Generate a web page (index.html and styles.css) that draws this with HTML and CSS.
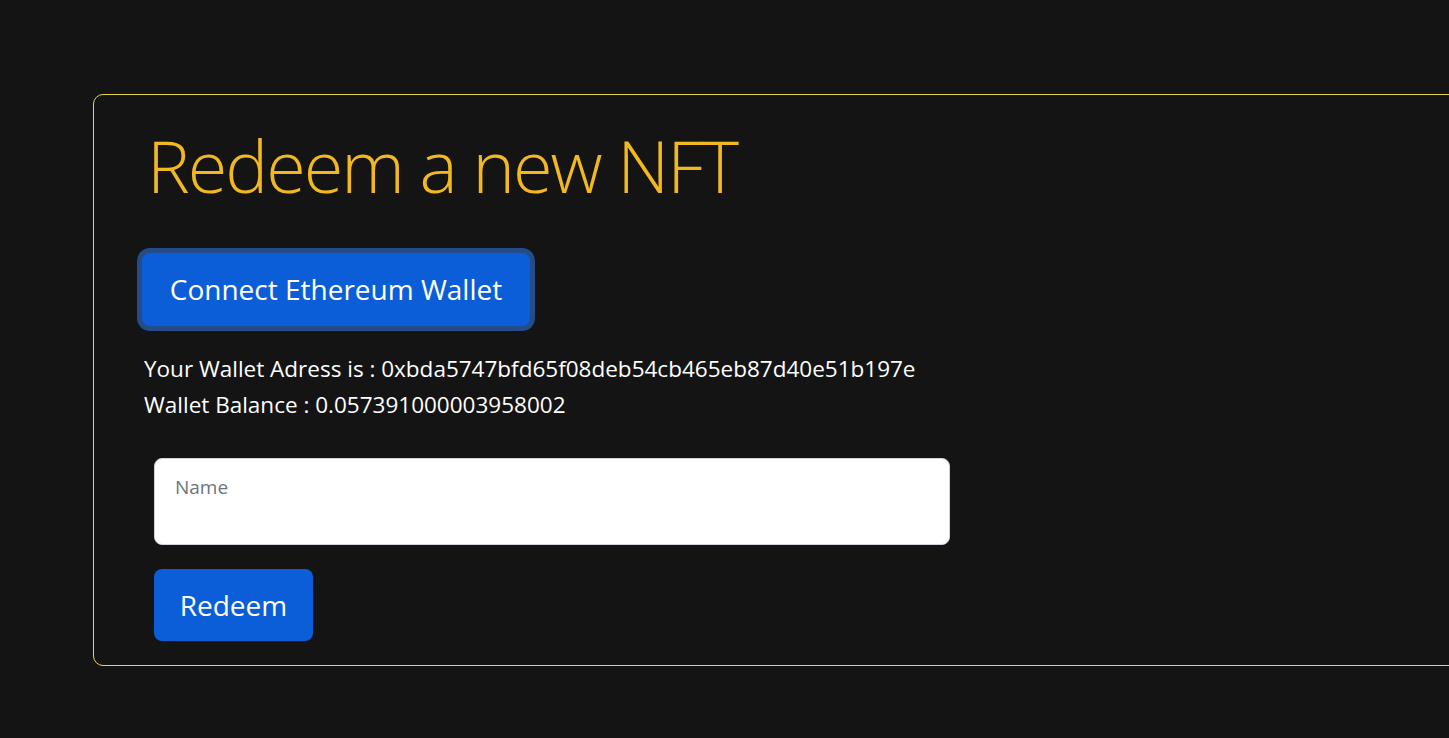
FILE: index.html
```html
<!DOCTYPE html>
<html lang="en">
<head>
<meta charset="utf-8">
<title>Redeem a new NFT</title>
<link rel="stylesheet" href="styles.css">
</head>
<body>
<main class="page">
  <section class="card">
    <h1 class="title">Redeem a new NFT</h1>
    <button class="btn btn-connect" type="button">Connect Ethereum Wallet</button>
    <div class="wallet-info">
      <p class="info-line">Your Wallet Adress is : 0xbda5747bfd65f08deb54cb465eb87d40e51b197e</p>
      <p class="info-line">Wallet Balance : 0.057391000003958002</p>
    </div>
    <form class="redeem-form">
      <label class="field">
        <span class="field-label">Name</span>
        <input class="field-input" type="text">
      </label>
      <button class="btn btn-redeem" type="button">Redeem</button>
    </form>
  </section>
</main>
</body>
</html>
```

FILE: styles.css
```css
html, body {
  margin: 0;
  padding: 0;
  background: #141414;
  overflow: hidden;
}

body {
  font-family: "Open Sans", "Noto Sans", sans-serif;
  color: #ffffff;
  height: 738px;
}

.page {
  padding: 94px 0 0 93px;
}

.card {
  width: 1420px;
  box-sizing: border-box;
  border: 1px solid #e6d44a;
  border-radius: 10px;
  padding: 27px 0 24px 48px;
  display: flex;
  flex-direction: column;
  align-items: flex-start;
}

.title {
  margin: 0 0 45px 5px;
  font-size: 72px;
  font-weight: 300;
  line-height: 1.2;
  color: #f2b81f;
  letter-spacing: -2px;
}

.btn {
  border: none;
  color: #ffffff;
  font-family: "Open Sans", "Noto Sans", sans-serif;
  background: #0b5ed7;
  border-radius: 8px;
  cursor: pointer;
}

.btn-connect {
  font-size: 28px;
  line-height: 37px;
  padding: 18px 0;
  width: 388px;
  box-shadow: 0 0 0 5px rgba(49, 132, 253, 0.5);
  margin-bottom: 25px;
}

.wallet-info {
  margin-left: 2px;
}

.info-line {
  margin: 0;
  font-size: 22.5px;
  line-height: 36px;
  white-space: nowrap;
}

.redeem-form {
  margin: 35px 0 0 12px;
  display: flex;
  flex-direction: column;
  align-items: flex-start;
  gap: 24px;
}

.field {
  position: relative;
  display: block;
  width: 796px;
  height: 87px;
}

.field-label {
  position: absolute;
  left: 21px;
  top: 16px;
  font-size: 19px;
  color: #6c757d;
  pointer-events: none;
}

.field-input {
  box-sizing: border-box;
  width: 100%;
  height: 100%;
  border: 1px solid #ced4da;
  border-radius: 8px;
  background: #ffffff;
  padding: 30px 20px 8px;
  font-size: 20px;
  font-family: "Open Sans", "Noto Sans", sans-serif;
  outline: none;
}

.btn-redeem {
  font-size: 28px;
  line-height: 40px;
  padding: 16px 0;
  width: 159px;
  height: 72px;
}
```
